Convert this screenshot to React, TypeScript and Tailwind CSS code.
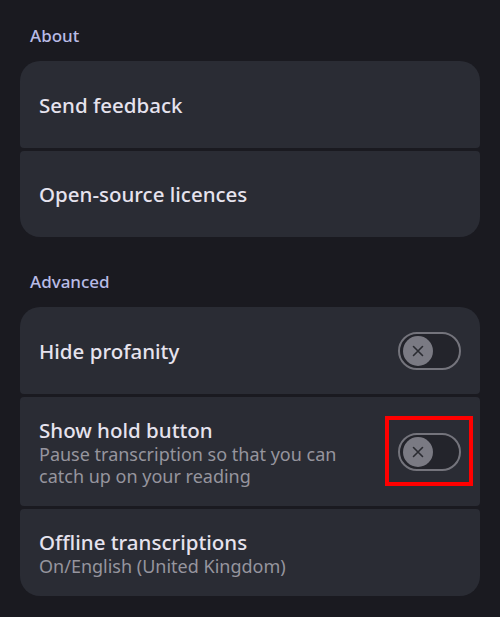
import React from "react";

const font = { fontFamily: '"Noto Sans", Roboto, sans-serif' };

function Toggle() {
  return (
    <div className="flex h-[38px] w-[63px] shrink-0 items-center rounded-full border-2 border-[#74747c] bg-[#23242b] pl-[3px]">
      <div className="flex h-[30px] w-[30px] items-center justify-center rounded-full bg-[#7a7a83]">
        <svg width="16" height="16" viewBox="0 0 16 16" fill="none">
          <path d="M3.5 3.5 L12.5 12.5 M12.5 3.5 L3.5 12.5" stroke="#2a2b31" strokeWidth="1.6" strokeLinecap="round" />
        </svg>
      </div>
    </div>
  );
}

function Row({
  title,
  subtitle,
  toggle,
  highlight,
  shape,
  height,
}: {
  title: string;
  subtitle?: string[];
  toggle?: boolean;
  highlight?: boolean;
  shape: string;
  height: string;
}) {
  return (
    <div className={`relative flex items-center justify-between bg-[#2a2c34] pl-[19px] pr-[19px] ${shape} ${height}`}>
      <div className="flex flex-col">
        <div className="text-[20.5px] font-medium leading-[26px] text-[#e6e3ee]">{title}</div>
        {subtitle && (
          <div className="text-[18px] leading-[22px] text-[#96959e]">
            {subtitle.map((s) => (
              <div key={s}>{s}</div>
            ))}
          </div>
        )}
      </div>
      {toggle && (
        <div className="relative">
          <Toggle />
          {highlight && (
            <div className="absolute left-[-13px] top-[-17px] h-[70px] w-[88px] border-4 border-[#ff0000]" />
          )}
        </div>
      )}
    </div>
  );
}

export default function App() {
  return (
    <div className="h-[617px] w-[500px] overflow-hidden bg-[#1a1a20] px-5" style={font}>
      <div className="pl-[10px] pt-[25px] text-[17px] font-medium leading-[22px] text-[#b8bbe6]">About</div>
      <div className="mt-[14px] flex flex-col gap-[3px]">
        <Row title="Send feedback" shape="rounded-t-[20px] rounded-b-[4px]" height="h-[87px]" />
        <Row title="Open-source licences" shape="rounded-t-[4px] rounded-b-[20px]" height="h-[86px]" />
      </div>
      <div className="mt-[34px] pl-[10px] text-[17px] font-medium leading-[22px] text-[#b8bbe6]">Advanced</div>
      <div className="mt-[14px] flex flex-col gap-[3px]">
        <Row title="Hide profanity" toggle shape="rounded-t-[20px] rounded-b-[4px]" height="h-[87px]" />
        <Row
          title="Show hold button"
          subtitle={["Pause transcription so that you can", "catch up on your reading"]}
          toggle
          highlight
          shape="rounded-[4px]"
          height="h-[109px]"
        />
        <Row
          title="Offline transcriptions"
          subtitle={["On/English (United Kingdom)"]}
          shape="rounded-t-[4px] rounded-b-[20px]"
          height="h-[87px]"
        />
      </div>
    </div>
  );
}
